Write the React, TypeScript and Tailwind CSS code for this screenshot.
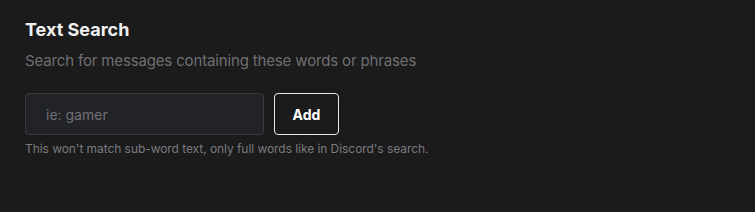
import React, { useState } from 'react';

export default function App() {
  const [value, setValue] = useState('');

  return (
    <div className="min-h-screen w-full bg-[#1b1b1c] px-[25px] pt-[19px] font-['Inter',sans-serif]">
      <h2 className="text-[18px] font-bold leading-[22px] text-[#f0f0f0]">Text Search</h2>
      <p className="mt-[10px] text-[15px] leading-[20px] tracking-[-0.01em] text-[#6f6f73]">
        Search for messages containing these words or phrases
      </p>

      <div className="mt-[22px] flex items-center gap-[10px]">
        <input
          value={value}
          onChange={(e) => setValue(e.target.value)}
          placeholder="ie: gamer"
          className="h-[42px] w-[239px] rounded-[4px] border border-[#3b3b3e] bg-[#222326] px-[20px] text-[14px] text-[#e5e5e5] placeholder:text-[#707074] outline-none"
        />
        <button className="h-[42px] w-[65px] rounded-[4px] border border-[#e8e8e8] bg-[#1b1b1c] text-[14px] font-bold text-white">
          Add
        </button>
      </div>
      <p className="mt-[6px] text-[12px] leading-[16px] tracking-[-0.005em] text-[#7a7a7e]">
        This won't match sub-word text, only full words like in Discord's search.
      </p>
    </div>
  );
}
